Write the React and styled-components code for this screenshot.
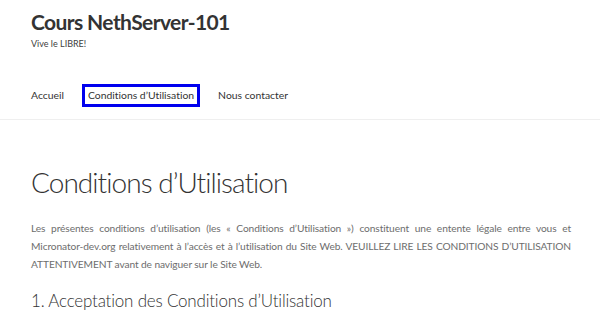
import React from 'react'
import styled, { createGlobalStyle } from 'styled-components'

const GlobalStyle = createGlobalStyle`
  html, body {
    margin: 0;
    padding: 0;
    background: #ffffff;
  }
  body {
    font-family: Lato, "Open Sans", "Liberation Sans", sans-serif;
    font-variant-ligatures: none;
    color: #6d6d6d;
  }
`;

const Header = styled.header`
  border-bottom: 1px solid #efefef;
  padding: 9px 31px 12px;
`;

const Branding = styled.div`
  display: flex;
  flex-direction: column;
  gap: 3px;
`;

const SiteTitle = styled.h1`
  margin: 0;
  font-size: 21px;
  font-weight: 700;
  line-height: 26px;
  color: #333333;
  letter-spacing: -0.6px;
`;

const Tagline = styled.p`
  margin: 0;
  font-size: 9px;
  line-height: 12px;
  color: #404040;
`;

const Nav = styled.nav`
  display: flex;
  align-items: center;
  gap: 24px;
  margin-top: 34px;
`;

const NavLink = styled.a`
  font-size: 10.4px;
  line-height: 13px;
  color: #333333;
  text-decoration: none;
  padding: 2px 3px;
  margin: 0 -6px;
  border: 3px solid ${({ $focused }) => ($focused ? '#0000ee' : 'transparent')};
`;

const Main = styled.main`
  padding: 44px 29px 0 31px;
`;

const PageTitle = styled.h2`
  margin: 0 0 19px;
  font-size: 28px;
  font-weight: 300;
  line-height: 36px;
  letter-spacing: -0.95px;
  color: #333333;
`;

const Paragraph = styled.p`
  margin: 0 0 15px;
  font-size: 10.2px;
  line-height: 18px;
  letter-spacing: -0.1px;
  text-align: justify;
  color: #6d6d6d;
`;

const SectionTitle = styled.h3`
  margin: 0;
  font-size: 17px;
  font-weight: 300;
  line-height: 26px;
  letter-spacing: -0.2px;
  color: #333333;
`;

const links = ['Accueil', 'Conditions d\u2019Utilisation', 'Nous contacter'];

export default function App() {
  return (
    <>
      <GlobalStyle />
      <Header>
        <Branding>
          <SiteTitle>Cours NethServer-101</SiteTitle>
          <Tagline>Vive le LIBRE!</Tagline>
        </Branding>
        <Nav>
          {links.map((label, i) => (
            <NavLink key={label} href="#" $focused={i === 1}>{label}</NavLink>
          ))}
        </Nav>
      </Header>
      <Main>
        <PageTitle>Conditions d’Utilisation</PageTitle>
        <Paragraph>
          Les présentes conditions d’utilisation (les « Conditions d’Utilisation ») constituent une entente légale entre vous et Micronator-dev.org relativement à l’accès et à l’utilisation du Site Web. VEUILLEZ LIRE LES CONDITIONS D’UTILISATION ATTENTIVEMENT avant de naviguer sur le Site Web.
        </Paragraph>
        <SectionTitle>1. Acceptation des Conditions d’Utilisation</SectionTitle>
      </Main>
    </>
  )
}
